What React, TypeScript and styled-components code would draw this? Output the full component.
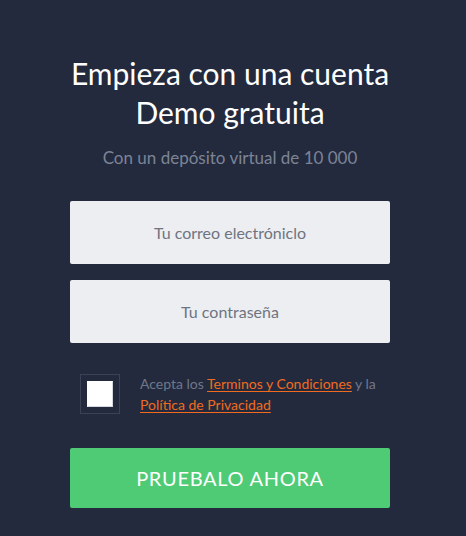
import React from "react";
import styled, { createGlobalStyle } from "styled-components";

const GlobalStyle = createGlobalStyle`
  html, body {
    margin: 0;
    padding: 0;
    background: #232a3e;
  }
  body {
    font-family: Lato, "Open Sans", "Liberation Sans", sans-serif;
  }
`;

const StyledPage = styled.div`
  min-height: 536px;
  box-sizing: border-box;
  padding: 54px 76px 0 70px;
  background: #232a3e;
`;

const StyledForm = styled.form`
  display: flex;
  flex-direction: column;
  width: 320px;
  margin: 0;
`;

const StyledTitle = styled.h1`
  margin: 0;
  font-size: 30px;
  line-height: 39px;
  font-weight: 400;
  color: #ffffff;
  text-align: center;
`;

const StyledSubtitle = styled.p`
  margin: 15px 0 0;
  font-size: 17px;
  line-height: 21px;
  color: #7c8495;
  text-align: center;
`;

const StyledInput = styled.input`
  box-sizing: border-box;
  width: 100%;
  height: 63px;
  margin-top: ${(props: { $gap: number }) => props.$gap}px;
  border: 0;
  border-radius: 2px;
  background: #eceef2;
  font-family: inherit;
  font-size: 16px;
  text-align: center;
  color: #3a4150;
  outline: 0;
  &::placeholder {
    color: #6f7480;
  }
`;

const StyledAgreeRow = styled.label`
  display: flex;
  align-items: center;
  gap: 20px;
  margin-top: 30px;
  padding-left: 10px;
`;

const StyledCheckFrame = styled.span`
  box-sizing: border-box;
  flex: none;
  display: flex;
  align-items: center;
  justify-content: center;
  width: 40px;
  height: 40px;
  border: 1px solid #3a4256;
`;

const StyledCheckBox = styled.input`
  appearance: none;
  box-sizing: border-box;
  width: 26px;
  height: 26px;
  margin: 0;
  background: #ffffff;
  border: 1px solid #d4d7de;
  border-top-color: #ffffff;
  border-left-color: #ffffff;
`;

const StyledAgreeText = styled.span`
  font-size: 14px;
  line-height: 21px;
  color: #6f778a;
`;

const StyledLink = styled.a`
  color: #f26a1e;
  text-decoration: underline;
  text-underline-offset: 2px;
`;

const StyledSubmit = styled.button`
  height: 60px;
  margin-top: 33px;
  border: 0;
  border-radius: 2px;
  background: #4ecb74;
  color: #ffffff;
  font-family: inherit;
  font-size: 20px;
  letter-spacing: 0.7px;
  cursor: pointer;
`;

const App: React.FC = () => {
  return (
    <StyledPage>
      <GlobalStyle />
      <StyledForm onSubmit={(e) => e.preventDefault()}>
        <StyledTitle>
          Empieza con una cuenta
          <br />
          Demo gratuita
        </StyledTitle>
        <StyledSubtitle>Con un depósito virtual de 10 000</StyledSubtitle>
        <StyledInput $gap={33} type="email" placeholder="Tu correo electróniclo" />
        <StyledInput $gap={16} type="password" placeholder="Tu contraseña" />
        <StyledAgreeRow>
          <StyledCheckFrame>
            <StyledCheckBox type="checkbox" />
          </StyledCheckFrame>
          <StyledAgreeText>
            Acepta los <StyledLink href="#">Terminos y Condiciones</StyledLink> y la
            <br />
            <StyledLink href="#">Política de Privacidad</StyledLink>
          </StyledAgreeText>
        </StyledAgreeRow>
        <StyledSubmit type="submit">PRUEBALO AHORA</StyledSubmit>
      </StyledForm>
    </StyledPage>
  );
};

export default App;
